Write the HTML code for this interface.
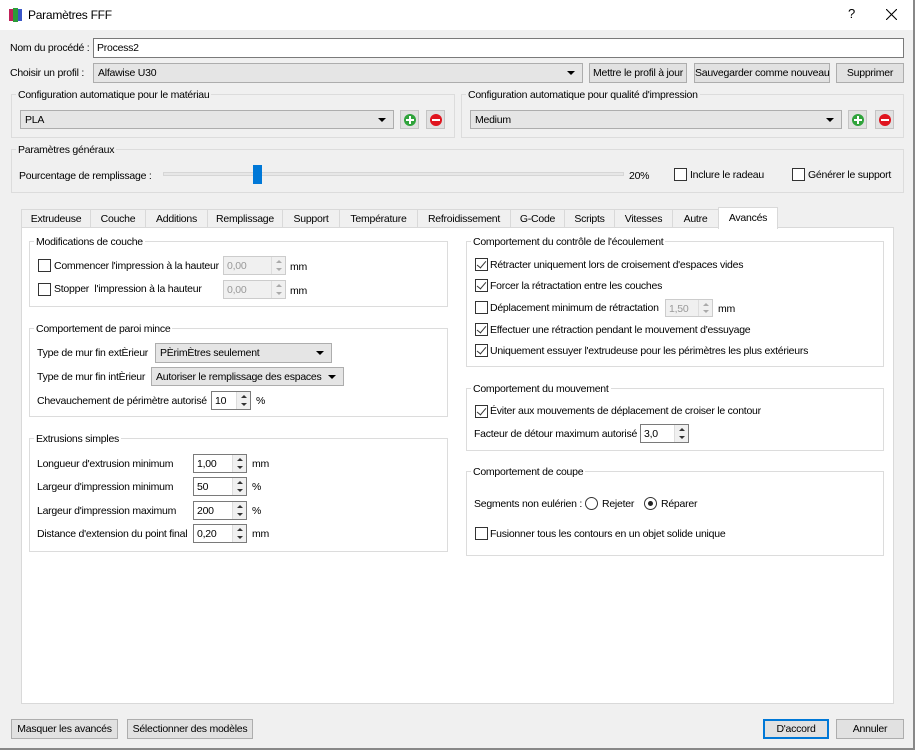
<!DOCTYPE html>
<html><head><meta charset="utf-8"><style>
*{box-sizing:border-box;margin:0;padding:0}
body{width:915px;height:750px;background:#f0f0f0;font-family:"Liberation Sans",sans-serif;font-size:10.5px;letter-spacing:-0.25px;color:#000;position:relative;overflow:hidden;white-space:nowrap}
.a{position:absolute;white-space:nowrap}
.t{position:absolute;white-space:nowrap;line-height:14px}
.inp{position:absolute;background:#fff;border:1px solid #7a7a7a;padding:2px 3px;line-height:14px}
.cb{position:absolute;background:#e5e5e5;border:1px solid #adadad;padding:2px 4px;line-height:14px}
.cb:after{content:"";position:absolute;right:7px;top:7px;border-left:4px solid transparent;border-right:4px solid transparent;border-top:4px solid #000}
.btn{position:absolute;background:#e1e1e1;border:1px solid #adadad;text-align:center;line-height:18px;white-space:nowrap}
.grp{position:absolute;border:1px solid #dcdcdc}
.gt{position:absolute;white-space:nowrap;padding:0 2px;line-height:13px}
.chk{position:absolute;width:13px;height:13px;border:1px solid #333;background:#fff}
.chk.on:after{content:"";position:absolute;left:3px;top:0px;width:4px;height:8px;border:solid #333;border-width:0 1.5px 1.5px 0;transform:rotate(40deg)}
.spin{position:absolute;background:#fff;border:1px solid #7a7a7a;padding:2px 3px;line-height:14px}
.spin.dis{background:#f0f0f0;border-color:#ccc;color:#999}
.spin .sb{position:absolute;right:0;top:0;bottom:0;width:14px;border-left:1px solid #ddd;background:#f0f0f0}
.spin .sb:before{content:"";position:absolute;left:4px;top:3px;border-left:3px solid transparent;border-right:3px solid transparent;border-bottom:3px solid #333}
.spin .sb:after{content:"";position:absolute;left:4px;bottom:3px;border-left:3px solid transparent;border-right:3px solid transparent;border-top:3px solid #333}
.spin.dis .sb:before{border-bottom-color:#aaa}.spin.dis .sb:after{border-top-color:#aaa}
.tab{position:absolute;top:209px;height:19px;border:1px solid #d9d9d9;border-bottom:none;background:#f0f0f0;text-align:center;line-height:18px}
.ib{position:absolute;width:19px;height:19px;background:#e1e1e1;border:1px solid #c4c4c4}
.ib i{position:absolute;left:3px;top:3px;width:12px;height:12px;border-radius:50%}
.ib i:before{content:"";position:absolute;left:2px;top:5px;width:8px;height:2px;background:#fff}
.ib.p i:after{content:"";position:absolute;left:5px;top:2px;width:2px;height:8px;background:#fff}
.rad{position:absolute;width:13px;height:13px;border:1px solid #333;border-radius:50%;background:#fff}
</style></head><body>
<div class="a" style="left:0;top:0;width:915px;height:30px;background:#fff"></div>
<div class="a" style="left:913px;top:0;width:2px;height:750px;background:#888"></div>
<div class="a" style="left:0;top:748px;width:915px;height:2px;background:#888"></div>
<svg class="a" style="left:9px;top:7px" width="14" height="16"><rect x="0" y="2" width="4" height="12" fill="#c0225a"/><rect x="4" y="1" width="5" height="14" fill="#2b9c3a"/><rect x="9" y="2" width="4" height="12" fill="#3a56c8"/></svg>
<div class="t" style="left:28px;top:8px;font-size:12px">Paramètres FFF</div>
<div class="t" style="left:848px;top:7px;font-size:13px">?</div>
<svg class="a" style="left:886px;top:9px" width="11" height="11"><path d="M0 0L11 11M11 0L0 11" stroke="#000" stroke-width="1.1"/></svg>

<div class="t" style="left:10px;top:41px">Nom du procédé :</div>
<div class="inp" style="left:93px;top:38px;width:811px;height:20px">Process2</div>
<div class="t" style="left:10px;top:66px">Choisir un profil :</div>
<div class="cb" style="left:93px;top:63px;width:490px;height:20px">Alfawise U30</div>
<div class="btn" style="left:589px;top:63px;width:98px;height:20px">Mettre le profil à jour</div>
<div class="btn" style="left:694px;top:63px;width:136px;height:20px">Sauvegarder comme nouveau</div>
<div class="btn" style="left:836px;top:63px;width:68px;height:20px">Supprimer</div>

<div class="grp" style="left:11px;top:94px;width:444px;height:44px"></div>
<div class="gt" style="left:16px;top:89px;background:#f0f0f0">Configuration automatique pour le matériau</div>
<div class="cb" style="left:20px;top:110px;width:374px;height:19px">PLA</div>
<div class="ib p" style="left:400px;top:110px"><i style="background:#2fa33b"></i></div>
<div class="ib" style="left:426px;top:110px"><i style="background:#e0141e"></i></div>

<div class="grp" style="left:461px;top:94px;width:443px;height:44px"></div>
<div class="gt" style="left:466px;top:89px;background:#f0f0f0">Configuration automatique pour qualité d'impression</div>
<div class="cb" style="left:470px;top:110px;width:372px;height:19px">Medium</div>
<div class="ib p" style="left:848px;top:110px"><i style="background:#2fa33b"></i></div>
<div class="ib" style="left:875px;top:110px"><i style="background:#e0141e"></i></div>

<div class="grp" style="left:11px;top:149px;width:893px;height:44px"></div>
<div class="gt" style="left:16px;top:144px;background:#f0f0f0">Paramètres généraux</div>
<div class="t" style="left:19px;top:169px">Pourcentage de remplissage :</div>
<div class="a" style="left:163px;top:172px;width:461px;height:4px;background:#e7e7e7;border:1px solid #d6d6d6"></div>
<div class="a" style="left:253px;top:165px;width:9px;height:19px;background:#0078d7"></div>
<div class="t" style="left:629px;top:169px">20%</div>
<div class="chk" style="left:674px;top:168px"></div><div class="t" style="left:690px;top:168px">Inclure le radeau</div>
<div class="chk" style="left:792px;top:168px"></div><div class="t" style="left:808px;top:168px">Générer le support</div>

<div class="tab" style="left:21px;width:70px">Extrudeuse</div>
<div class="tab" style="left:90px;width:56px">Couche</div>
<div class="tab" style="left:145px;width:63px">Additions</div>
<div class="tab" style="left:207px;width:76px">Remplissage</div>
<div class="tab" style="left:282px;width:58px">Support</div>
<div class="tab" style="left:339px;width:79px">Température</div>
<div class="tab" style="left:417px;width:94px">Refroidissement</div>
<div class="tab" style="left:510px;width:55px">G-Code</div>
<div class="tab" style="left:564px;width:51px">Scripts</div>
<div class="tab" style="left:614px;width:59px">Vitesses</div>
<div class="tab" style="left:672px;width:47px">Autre</div>
<div class="a" style="left:21px;top:227px;width:873px;height:477px;background:#fff;border:1px solid #d9d9d9"></div>
<div class="tab" style="left:718px;top:207px;width:60px;height:22px;background:#fff;line-height:20px">Avancés</div>

<div class="grp" style="left:29px;top:241px;width:419px;height:66px"></div>
<div class="gt" style="left:34px;top:236px;background:#fff">Modifications de couche</div>
<div class="chk" style="left:38px;top:259px"></div><div class="t" style="left:54px;top:259px">Commencer l'impression à la hauteur</div>
<div class="spin dis" style="left:223px;top:256px;width:63px;height:19px">0,00<span class="sb"></span></div><div class="t" style="left:290px;top:260px">mm</div>
<div class="chk" style="left:38px;top:283px"></div><div class="t" style="left:54px;top:282px">Stopper &nbsp;l'impression à la hauteur</div>
<div class="spin dis" style="left:223px;top:280px;width:63px;height:19px">0,00<span class="sb"></span></div><div class="t" style="left:290px;top:284px">mm</div>

<div class="grp" style="left:29px;top:328px;width:419px;height:89px"></div>
<div class="gt" style="left:34px;top:323px;background:#fff">Comportement de paroi mince</div>
<div class="t" style="left:37px;top:346px">Type de mur fin extÈrieur</div>
<div class="cb" style="left:155px;top:343px;width:177px;height:20px">PÈrimÈtres seulement</div>
<div class="t" style="left:37px;top:370px">Type de mur fin intÈrieur</div>
<div class="cb" style="left:151px;top:367px;width:193px;height:19px">Autoriser le remplissage des espaces</div>
<div class="t" style="left:37px;top:394px">Chevauchement de périmètre autorisé</div>
<div class="spin" style="left:211px;top:391px;width:40px;height:19px">10<span class="sb"></span></div><div class="t" style="left:256px;top:394px">%</div>

<div class="grp" style="left:29px;top:438px;width:419px;height:114px"></div>
<div class="gt" style="left:34px;top:433px;background:#fff">Extrusions simples</div>
<div class="t" style="left:37px;top:457px">Longueur d'extrusion minimum</div>
<div class="spin" style="left:193px;top:454px;width:54px;height:19px">1,00<span class="sb"></span></div><div class="t" style="left:252px;top:457px">mm</div>
<div class="t" style="left:37px;top:480px">Largeur d'impression minimum</div>
<div class="spin" style="left:193px;top:477px;width:54px;height:19px">50<span class="sb"></span></div><div class="t" style="left:252px;top:480px">%</div>
<div class="t" style="left:37px;top:504px">Largeur d'impression maximum</div>
<div class="spin" style="left:193px;top:501px;width:54px;height:19px">200<span class="sb"></span></div><div class="t" style="left:252px;top:504px">%</div>
<div class="t" style="left:37px;top:527px">Distance d'extension du point final</div>
<div class="spin" style="left:193px;top:524px;width:54px;height:19px">0,20<span class="sb"></span></div><div class="t" style="left:252px;top:527px">mm</div>

<div class="grp" style="left:466px;top:241px;width:418px;height:126px"></div>
<div class="gt" style="left:471px;top:236px;background:#fff">Comportement du contrôle de l'écoulement</div>
<div class="chk on" style="left:475px;top:258px"></div><div class="t" style="left:490px;top:258px">Rétracter uniquement lors de croisement d'espaces vides</div>
<div class="chk on" style="left:475px;top:279px"></div><div class="t" style="left:490px;top:279px">Forcer la rétractation entre les couches</div>
<div class="chk" style="left:475px;top:301px"></div><div class="t" style="left:490px;top:301px">Déplacement minimum de rétractation</div>
<div class="spin dis" style="left:665px;top:299px;width:48px;height:18px">1,50<span class="sb"></span></div><div class="t" style="left:718px;top:302px">mm</div>
<div class="chk on" style="left:475px;top:323px"></div><div class="t" style="left:490px;top:323px">Effectuer une rétraction pendant le mouvement d'essuyage</div>
<div class="chk on" style="left:475px;top:344px"></div><div class="t" style="left:490px;top:344px">Uniquement essuyer l'extrudeuse pour les périmètres les plus extérieurs</div>

<div class="grp" style="left:466px;top:388px;width:418px;height:63px"></div>
<div class="gt" style="left:471px;top:383px;background:#fff">Comportement du mouvement</div>
<div class="chk on" style="left:475px;top:405px"></div><div class="t" style="left:490px;top:404px">Éviter aux mouvements de déplacement de croiser le contour</div>
<div class="t" style="left:474px;top:427px">Facteur de détour maximum autorisé</div>
<div class="spin" style="left:640px;top:424px;width:49px;height:19px">3,0<span class="sb"></span></div>

<div class="grp" style="left:466px;top:471px;width:418px;height:85px"></div>
<div class="gt" style="left:471px;top:466px;background:#fff">Comportement de coupe</div>
<div class="t" style="left:474px;top:497px">Segments non eulérien :</div>
<div class="rad" style="left:585px;top:497px"></div><div class="t" style="left:602px;top:497px">Rejeter</div>
<div class="rad" style="left:644px;top:497px"><span style="position:absolute;left:3px;top:3px;width:5px;height:5px;border-radius:50%;background:#222"></span></div><div class="t" style="left:661px;top:497px">Réparer</div>
<div class="chk" style="left:475px;top:527px"></div><div class="t" style="left:490px;top:527px">Fusionner tous les contours en un objet solide unique</div>

<div class="btn" style="left:11px;top:719px;width:107px;height:20px">Masquer les avancés</div>
<div class="btn" style="left:127px;top:719px;width:126px;height:20px">Sélectionner des modèles</div>
<div class="btn" style="left:763px;top:719px;width:66px;height:20px;border:2px solid #0078d7;line-height:16px">D'accord</div>
<div class="btn" style="left:836px;top:719px;width:68px;height:20px">Annuler</div>
</body></html>
